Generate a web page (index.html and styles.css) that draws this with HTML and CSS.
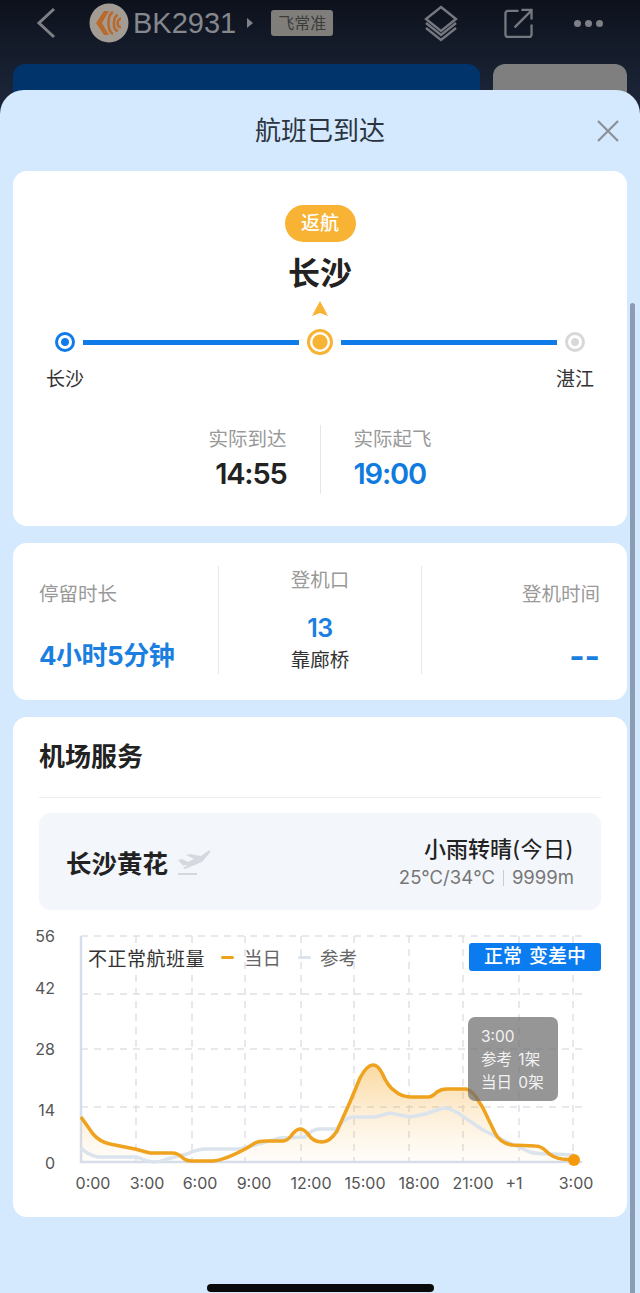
FILE: index.html
```html
<!DOCTYPE html>
<html lang="zh-CN">
<head>
    <meta charset="UTF-8">
    <meta name="viewport" content="width=device-width, initial-scale=1.0">
    <title>BK2931</title>
    <link rel="stylesheet" href="styles.css">
</head>
<body>
    <!-- Header behind the sheet -->
    <div class="topbar">
        <svg class="back-icon" width="20" height="32" viewBox="0 0 20 32"><path d="M18 2 3 16l15 14" fill="none" stroke="#7e8085" stroke-width="3"/></svg>
        <svg class="logo" width="40" height="40" viewBox="0 0 40 40">
            <circle cx="20" cy="20" r="19.5" fill="#a39c95"/>
            <path d="M15 8 7 20l8 12h5l-7-12 7-12z" fill="#b96a2b"/>
            <path d="M24 9c-6 3-6 19 0 22M29 12c-5 1-6 15 0 16M32 16c-4-1-5 9 0 8" fill="none" stroke="#b96a2b" stroke-width="2.600"/>
        </svg>
        <span class="flight-no">BK2931</span>
        <span class="flight-arrow"></span>
        <span class="flight-tag">飞常准</span>
        <svg class="layers-icon" width="36" height="37" viewBox="0 0 36 37">
            <path d="M18 2 33 14 18 26 3 14z" fill="none" stroke="#75787e" stroke-width="2.400"/>
            <path d="M3 20l15 12 15-12M3 25l15 12 15-12" fill="none" stroke="#75787e" stroke-width="2.400" transform="translate(0 -2)"/>
        </svg>
        <svg class="share-icon" width="29" height="30" viewBox="0 0 30 31">
            <path d="M15 3H4a2.500 2.500 0 0 0-2.500 2.500v22A2.500 2.500 0 0 0 4 30h22a2.500 2.500 0 0 0 2.500-2.500V17" fill="none" stroke="#75787e" stroke-width="2.400"/>
            <path d="M11 20 28 3M18 2h10.500v10" fill="none" stroke="#75787e" stroke-width="2.400"/>
        </svg>
        <div class="more-icon"><i></i><i></i><i></i></div>
    </div>
    <div class="back-cards">
        <div class="back-card-blue"></div>
        <div class="back-card-grey"></div>
    </div>

    <!-- Flight status sheet -->
    <div class="sheet">
        <div class="sheet-title">航班已到达
            <svg class="close-icon" width="24" height="24" viewBox="0 0 24 24"><path d="M2 2l20 20M22 2 2 22" stroke="#8a9099" stroke-width="2.200"/></svg>
        </div>

        <div class="card route-card">
            <div class="pill">返航</div>
            <div class="route-city">长沙</div>
            <svg class="route-arrow" width="16" height="15" viewBox="0 0 16 15"><path d="M8 0l8 15-8-3-8 3z" fill="#f8b334"/></svg>
            <div class="track">
                <span class="dot dot-blue"></span>
                <span class="track-line"></span>
                <span class="dot-mid"></span>
                <span class="track-line"></span>
                <span class="dot dot-grey"></span>
            </div>
            <div class="track-labels"><span>长沙</span><span>湛江</span></div>
            <div class="times">
                <div class="time-col time-left">
                    <div class="time-label">实际到达</div>
                    <div class="time-value">14:55</div>
                </div>
                <div class="time-col time-right">
                    <div class="time-label">实际起飞</div>
                    <div class="time-value time-blue">19:00</div>
                </div>
            </div>
        </div>

        <div class="card stay-card">
            <div class="stay-col">
                <div class="stay-label">停留时长</div>
                <div class="stay-value">4小时5分钟</div>
            </div>
            <div class="gate-col">
                <div class="gate-label">登机口</div>
                <div class="gate-no">13</div>
                <div class="gate-type">靠廊桥</div>
            </div>
            <div class="stay-col stay-end">
                <div class="stay-label">登机时间</div>
                <div class="stay-value stay-dash">--</div>
            </div>
        </div>

        <div class="card airport-card">
            <div class="airport-title">机场服务</div>
            <div class="airport-panel">
                <div class="airport-name">长沙黄花
                    <svg width="34" height="28" viewBox="0 0 34 28">
                        <path d="M1 12l4-1 6 3 6-3-8-4 4-1 11 2 7-5c2-1 3 0 2 1.500L25 14 8 21l-2-1 5-3-5 .500z" fill="#d5d8de"/>
                        <path d="M1 26h19" stroke="#d5d8de" stroke-width="2"/>
                    </svg>
                </div>
                <div class="weather">
                    <div class="weather-main">小雨转晴<span class="weather-day">(今日)</span></div>
                    <div class="weather-sub">25℃/34℃<span class="weather-sep"></span>9999m</div>
                </div>
            </div>

            <!-- Irregular flight chart -->
            <div class="chart">
                <svg class="chart-svg" width="614" height="307" viewBox="13 910 614 307">
                    <defs>
                        <linearGradient id="areaFill" gradientUnits="userSpaceOnUse" x1="0" y1="1065" x2="0" y2="1162">
                            <stop offset="0" stop-color="#f5a623" stop-opacity="0.42"/>
                            <stop offset="0.55" stop-color="#f5a623" stop-opacity="0.16"/>
                            <stop offset="1" stop-color="#f5a623" stop-opacity="0.02"/>
                        </linearGradient>
                    </defs>
                    <g class="grid-lines">
                        <path d="M81 936H582M81 994H582M81 1049H582M81 1107H582"/>
                        <path d="M136 936V1162M192 936V1162M245 936V1162M301 936V1162M354 936V1162M409 936V1162M463 936V1162M519 936V1162M573 936V1162"/>
                    </g>
                    <path class="axis" d="M81 936V1162H582"/>
                    <path class="area" d="M81 1117L93 1134Q100 1142 110 1144L135 1149 150 1153 172 1153Q178 1153 183 1158 186 1161 192 1161L213 1161Q225 1160 247 1148L255 1143Q259 1141 266 1141L283 1141Q287 1141 291 1136 296 1129 300 1129 304 1129 308 1134 313 1142 322 1142 330 1142 337 1131L350 1102 360 1078Q367 1065 373 1065 378 1065 382 1073 388 1087 395 1091 401 1097 412 1097L428 1097Q432 1097 437 1092 441 1089 447 1089L466 1089Q471 1090 476 1097L483 1108 495 1133Q500 1143 512 1145L535 1146Q541 1146 546 1151 553 1158 562 1159L574 1160V1162H81z"/>
                    <path class="line-ref" d="M81 1148Q88 1155 98 1157L137 1157Q145 1161 153 1162 160 1162 167 1159L187 1154Q197 1149 207 1149L240 1149 262 1143 280 1138 305 1137Q312 1129 320 1129L337 1129Q345 1117 353 1117L375 1117 390 1113 410 1117 425 1114 443 1108Q450 1108 458 1113L483 1130 507 1142 530 1152Q536 1154 553 1154L574 1155"/>
                    <path class="line-day" d="M81 1117L93 1134Q100 1142 110 1144L135 1149 150 1153 172 1153Q178 1153 183 1158 186 1161 192 1161L213 1161Q225 1160 247 1148L255 1143Q259 1141 266 1141L283 1141Q287 1141 291 1136 296 1129 300 1129 304 1129 308 1134 313 1142 322 1142 330 1142 337 1131L350 1102 360 1078Q367 1065 373 1065 378 1065 382 1073 388 1087 395 1091 401 1097 412 1097L428 1097Q432 1097 437 1092 441 1089 447 1089L466 1089Q471 1090 476 1097L483 1108 495 1133Q500 1143 512 1145L535 1146Q541 1146 546 1151 553 1158 562 1159L574 1160"/>
                    <circle cx="574" cy="1160" r="6" fill="#f59a0c"/>
                    <g class="axis-y">
                        <text x="55" y="942">56</text>
                        <text x="55" y="994">42</text>
                        <text x="55" y="1055">28</text>
                        <text x="55" y="1116">14</text>
                        <text x="55" y="1169">0</text>
                    </g>
                    <g class="axis-x">
                        <text x="93" y="1189">0:00</text>
                        <text x="147" y="1189">3:00</text>
                        <text x="200" y="1189">6:00</text>
                        <text x="254" y="1189">9:00</text>
                        <text x="311" y="1189">12:00</text>
                        <text x="365" y="1189">15:00</text>
                        <text x="419" y="1189">18:00</text>
                        <text x="473" y="1189">21:00</text>
                        <text x="514" y="1189">+1</text>
                        <text x="576" y="1189">3:00</text>
                    </g>
                </svg>
                <div class="legend">
                    <span class="legend-title">不正常航班量</span>
                    <i class="legend-dash dash-day"></i><span class="legend-item">当日</span>
                    <i class="legend-dash dash-ref"></i><span class="legend-item">参考</span>
                </div>
                <div class="chart-badge">正常 变差中</div>
                <div class="chart-tip">
                    <div>3:00</div>
                    <div>参考 1架</div>
                    <div>当日 0架</div>
                </div>
            </div>
        </div>
    </div>

    <div class="scrollbar"></div>
    <div class="home-bar"></div>
</body>
</html>
```

FILE: styles.css
```css
/* Page */
body {
    margin: 0;
    width: 640px;
    height: 1293px;
    position: relative;
    overflow: hidden;
    background: linear-gradient(180deg, #0d111c 0px, #1a2436 90px);
    font-family: Inter, "Noto Sans CJK SC", sans-serif;
    color: #222;
}

/* Top bar behind the sheet */
.topbar {
    height: 46px;
    display: flex;
    align-items: center;
}

.back-icon { margin-left: 36px; }
.logo { margin-left: 33px; }

.flight-no {
    margin-left: 4px;
    font-family: "Liberation Sans", sans-serif;
    font-size: 29px;
    color: #85878c;
}

.flight-arrow {
    margin-left: 11px;
    border-left: 6px solid #808288;
    border-top: 5px solid transparent;
    border-bottom: 5px solid transparent;
}

.flight-tag {
    margin-left: 18px;
    width: 62px;
    height: 26px;
    line-height: 26px;
    text-align: center;
    font-size: 16px;
    color: #3c3c3c;
    background-color: #807e7a;
    border-radius: 3px;
}

.layers-icon { margin-left: 90px; }
.share-icon { margin-left: 45px; }

.more-icon {
    margin-left: 41px;
    display: flex;
    gap: 4px;
}

.more-icon i {
    width: 7px;
    height: 7px;
    border-radius: 50%;
    background-color: #7e8085;
}

.back-cards {
    margin-top: 18px;
    padding: 0 13px;
    display: flex;
    gap: 13px;
}

.back-card-blue {
    width: 467px;
    height: 60px;
    background-color: #00346b;
    border-radius: 12px;
}

.back-card-grey {
    width: 134px;
    height: 60px;
    background-color: #7f7f7f;
    border-radius: 12px;
}

/* Sheet over the page */
.sheet {
    position: absolute;
    top: 90px;
    left: 0;
    right: 0;
    bottom: 0;
    padding: 0 13px;
    background-color: #d4e9fd;
    border-radius: 24px 24px 0 0;
}

.sheet-title {
    position: relative;
    height: 81px;
    line-height: 81px;
    text-align: center;
    font-size: 26px;
    color: #2b3440;
}

.close-icon {
    position: absolute;
    right: 7px;
    top: 29px;
}

.card {
    background-color: #fff;
    border-radius: 14px;
    margin-bottom: 17px;
}

/* Route card */
.route-card {
    height: 355px;
    display: flex;
    flex-direction: column;
    align-items: center;
}

.pill {
    margin-top: 34px;
    width: 71px;
    height: 37px;
    line-height: 37px;
    text-align: center;
    font-size: 19px;
    font-weight: 500;
    color: #fff;
    background-color: #f8b334;
    border-radius: 19px;
}

.route-city {
    margin-top: 12px;
    line-height: 40px;
    font-size: 32px;
    font-weight: 700;
    color: #222;
}

.route-arrow {
    display: block;
    margin-top: 7px;
}

.track {
    margin-top: 13px;
    width: 100%;
    height: 26px;
    box-sizing: border-box;
    padding: 0 42px;
    display: flex;
    align-items: center;
    gap: 8px;
}

.track-line {
    flex: 1;
    height: 5px;
    background-color: #0f7be8;
}

.dot {
    width: 20px;
    height: 20px;
    box-sizing: border-box;
    border-radius: 50%;
    border: 3px solid;
    background: radial-gradient(circle, currentColor 3.500px, #fff 4.500px);
}

.dot-blue { color: #0f7be8; }
.dot-grey { color: #d8d8d8; }

.dot-mid {
    width: 26px;
    height: 26px;
    box-sizing: border-box;
    border-radius: 50%;
    border: 3px solid #f8b334;
    background: radial-gradient(circle, #f8b334 7px, #fff 8px);
}

.track-labels {
    margin-top: 12px;
    width: 100%;
    box-sizing: border-box;
    padding: 0 33px;
    display: flex;
    justify-content: space-between;
    line-height: 26px;
    font-size: 19px;
    color: #333;
}

.times {
    margin-top: 32px;
    width: 100%;
    height: 69px;
    display: flex;
}

.time-col {
    flex: 1;
    box-sizing: border-box;
}

.time-left {
    padding-right: 33px;
    text-align: right;
    border-right: 1px solid #e6e6e6;
}

.time-right {
    padding-left: 33px;
}

.time-label {
    line-height: 28px;
    font-size: 19.500px;
    color: #999;
}

.time-value {
    margin-top: 3px;
    line-height: 36px;
    font-size: 29px;
    font-weight: 600;
    letter-spacing: -1.200px;
    color: #222;
}

.time-blue { color: #0f7be0; }

/* Stay and gate card */
.stay-card {
    height: 157px;
    box-sizing: border-box;
    padding: 23px 27px 26px 26px;
    display: grid;
    grid-template-columns: 179px 204px 1fr;
}

.stay-col { padding-top: 14px; }
.stay-end { text-align: right; }

.stay-label {
    line-height: 28px;
    font-size: 19.500px;
    color: #999;
}

.stay-value {
    margin-top: 30px;
    line-height: 36px;
    font-size: 26px;
    font-weight: 700;
    letter-spacing: -0.500px;
    color: #1a7fe0;
}

.stay-dash {
    font-size: 33px;
    letter-spacing: 0;
}

.gate-col {
    text-align: center;
    border-left: 1px solid #e6e6e6;
    border-right: 1px solid #e6e6e6;
}

.gate-label {
    line-height: 28px;
    font-size: 19.500px;
    color: #999;
}

.gate-no {
    margin-top: 17px;
    line-height: 34px;
    font-size: 25px;
    font-weight: 600;
    letter-spacing: -0.500px;
    color: #1a7fe0;
}

.gate-type {
    margin-top: 2px;
    line-height: 26px;
    font-size: 19.500px;
    color: #333;
}

/* Airport card */
.airport-card {
    height: 500px;
    box-sizing: border-box;
    padding: 22px 26px 0;
}

.airport-title {
    height: 58px;
    line-height: 36px;
    font-size: 26px;
    font-weight: 700;
    color: #222;
    border-bottom: 1px solid #eeeeee;
}

.airport-panel {
    margin-top: 15px;
    height: 97px;
    padding: 0 27px;
    display: flex;
    align-items: center;
    justify-content: space-between;
    background-color: #f3f6fb;
    border-radius: 12px;
}

.airport-name {
    display: flex;
    align-items: center;
    gap: 9px;
    font-size: 25.500px;
    font-weight: 700;
    color: #222;
}

.weather { text-align: right; }

.weather-main {
    line-height: 30px;
    font-size: 22px;
    font-weight: 500;
    color: #222;
}

.weather-day {
    font-weight: 400;
    letter-spacing: 0.500px;
}

.weather-sub {
    line-height: 26px;
    font-size: 18.500px;
    color: #777;
}

.weather-sep {
    display: inline-block;
    width: 1px;
    height: 16px;
    margin: 0 8px;
    vertical-align: -2px;
    background-color: #cccccc;
}

/* Chart */
.chart {
    position: relative;
    height: 307px;
    margin: 0 -26px;
}

.chart-svg { display: block; }

.grid-lines path {
    fill: none;
    stroke: #dfe1e5;
    stroke-width: 1.500;
    stroke-dasharray: 7 6;
}

.axis {
    fill: none;
    stroke: #d5deea;
    stroke-width: 2.500;
}

.area { fill: url(#areaFill); }

.line-ref {
    fill: none;
    stroke: #dbe3ec;
    stroke-width: 3.500;
    stroke-linejoin: round;
}

.line-day {
    fill: none;
    stroke: #eea21d;
    stroke-width: 3.500;
    stroke-linejoin: round;
}

.axis-y text,
.axis-x text {
    font-family: Inter, sans-serif;
    font-size: 16px;
    fill: #555;
}

.axis-y text { text-anchor: end; }
.axis-x text { text-anchor: middle; }

.legend {
    position: absolute;
    left: 75px;
    top: 33px;
    height: 28px;
    display: flex;
    align-items: center;
    white-space: nowrap;
}

.legend-title {
    font-size: 19px;
    letter-spacing: 0.500px;
    color: #333;
}

.legend-item {
    font-size: 18.500px;
    color: #666;
}

.legend-dash {
    width: 13px;
    height: 3px;
    margin-right: 10px;
    border-radius: 2px;
}

.dash-day { margin-left: 16px; background-color: #eea21d; }
.dash-ref { margin-left: 17px; margin-right: 9px; background-color: #dbe3ec; }

.chart-badge {
    position: absolute;
    left: 456px;
    top: 33px;
    width: 132px;
    height: 28px;
    line-height: 28px;
    text-align: center;
    font-size: 19px;
    font-weight: 500;
    word-spacing: 2px;
    color: #fff;
    background-color: #0a7cf0;
    border-radius: 3px;
}

.chart-tip {
    position: absolute;
    left: 455px;
    top: 107px;
    width: 90px;
    height: 84px;
    box-sizing: border-box;
    padding: 8px 13px;
    font-size: 15.500px;
    line-height: 23px;
    word-spacing: 2px;
    color: #f2f2f2;
    background-color: rgba(110, 110, 110, 0.72);
    border-radius: 7px;
}

/* Overlays at the page edge */
.scrollbar {
    position: absolute;
    left: 630px;
    top: 303px;
    bottom: 0;
    width: 5px;
    background-color: #8a9db5;
    border-radius: 3px 3px 0 0;
}

.home-bar {
    position: absolute;
    left: 207px;
    top: 1284px;
    width: 227px;
    height: 8px;
    background-color: #0a0a0a;
    border-radius: 4px;
}
```
